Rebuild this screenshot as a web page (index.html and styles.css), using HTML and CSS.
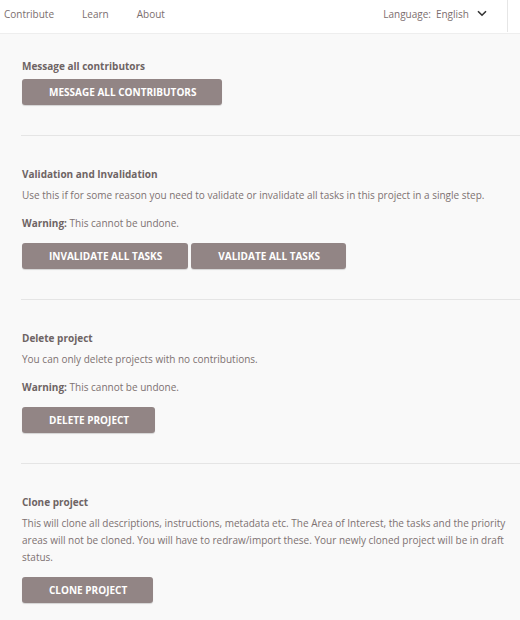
FILE: index.html
```html
<!DOCTYPE html>
<html lang="en">
<head>
<meta charset="utf-8">
<link rel="stylesheet" href="styles.css">
</head>
<body>
<header class="topbar">
  <nav class="nav">
    <a class="nav-link" href="#">Contribute</a>
    <a class="nav-link" href="#">Learn</a>
    <a class="nav-link" href="#">About</a>
  </nav>
  <div class="lang">
    <span class="lang-label">Language:</span>
    <span class="lang-value">English</span>
    <svg class="chevron" width="10" height="7" viewBox="0 0 10 7"><path d="M1 1.2 L5 5.2 L9 1.2" fill="none" stroke="#333" stroke-width="1.6"/></svg>
  </div>
  <div class="side"></div>
</header>
<main class="content">
  <section class="section first">
    <h3 class="title">Message all contributors</h3>
    <div class="actions tight"><button class="btn">Message all contributors</button></div>
  </section>
  <section class="section">
    <h3 class="title">Validation and Invalidation</h3>
    <p class="text">Use this if for some reason you need to validate or invalidate all tasks in this project in a single step.</p>
    <p class="text warn"><b>Warning:</b> This cannot be undone.</p>
    <div class="actions"><button class="btn">Invalidate all tasks</button><button class="btn">Validate all tasks</button></div>
  </section>
  <section class="section">
    <h3 class="title">Delete project</h3>
    <p class="text">You can only delete projects with no contributions.</p>
    <p class="text warn"><b>Warning:</b> This cannot be undone.</p>
    <div class="actions"><button class="btn">Delete project</button></div>
  </section>
  <section class="section last">
    <h3 class="title">Clone project</h3>
    <p class="text">This will clone all descriptions, instructions, metadata etc. The Area of Interest, the tasks and the priority areas will not be cloned. You will have to redraw/import these. Your newly cloned project will be in draft status.</p>
    <div class="actions"><button class="btn">Clone project</button></div>
  </section>
</main>
</body>
</html>
```
FILE: styles.css
```css
* { box-sizing: border-box; }
html, body { margin: 0; padding: 0; }
body {
  background: #f9f9f9;
  font-family: "Open Sans", "Noto Sans", sans-serif;
  color: #7d7171;
  font-size: 10px;
}
.topbar {
  height: 34px;
  background: #fff;
  border-bottom: 1px solid #eeeeee;
  display: flex;
  align-items: flex-start;
}
.nav { display: flex; gap: 28px; padding: 6px 0 0 4px; flex: 1; line-height: 17px; }
.nav-link { color: #7b6e6e; text-decoration: none; font-size: 10px; }
.lang { display: flex; align-items: center; font-size: 10px; line-height: 17px; color: #7b6e6e; padding: 6px 20px 0 0; }
.lang-value { margin-left: 5px; }
.chevron { margin-left: 8px; margin-top: -2px; }
.side { width: 13px; height: 32px; border-left: 1px solid #e6e6e6; }
.content { padding-left: 21px; }
.section {
  padding: 30px 0 30px 1px;
  border-bottom: 1px solid #e5e5e5;
}
.section.first { padding-top: 24px; }
.section.last { border-bottom: none; }
.title {
  margin: 0 0 4px;
  font-size: 10px;
  line-height: 17px;
  font-weight: 700;
  color: #6e6464;
}
.text {
  margin: 0 0 11px;
  font-size: 10px;
  line-height: 17px;
}
.text b { font-weight: 700; color: #6e6464; }
.actions { display: flex; gap: 3px; margin-top: 9px; }
.actions.tight { margin-top: 0; }
.btn {
  height: 26px;
  padding: 0 26px 0 27px;
  border: none;
  border-radius: 3px;
  background: #928585;
  color: #fff;
  font-family: "Open Sans", "Noto Sans", sans-serif;
  font-weight: 700;
  font-size: 10px;
  text-transform: uppercase;
  box-shadow: 0 1px 1px rgba(0,0,0,0.15);
}
```
